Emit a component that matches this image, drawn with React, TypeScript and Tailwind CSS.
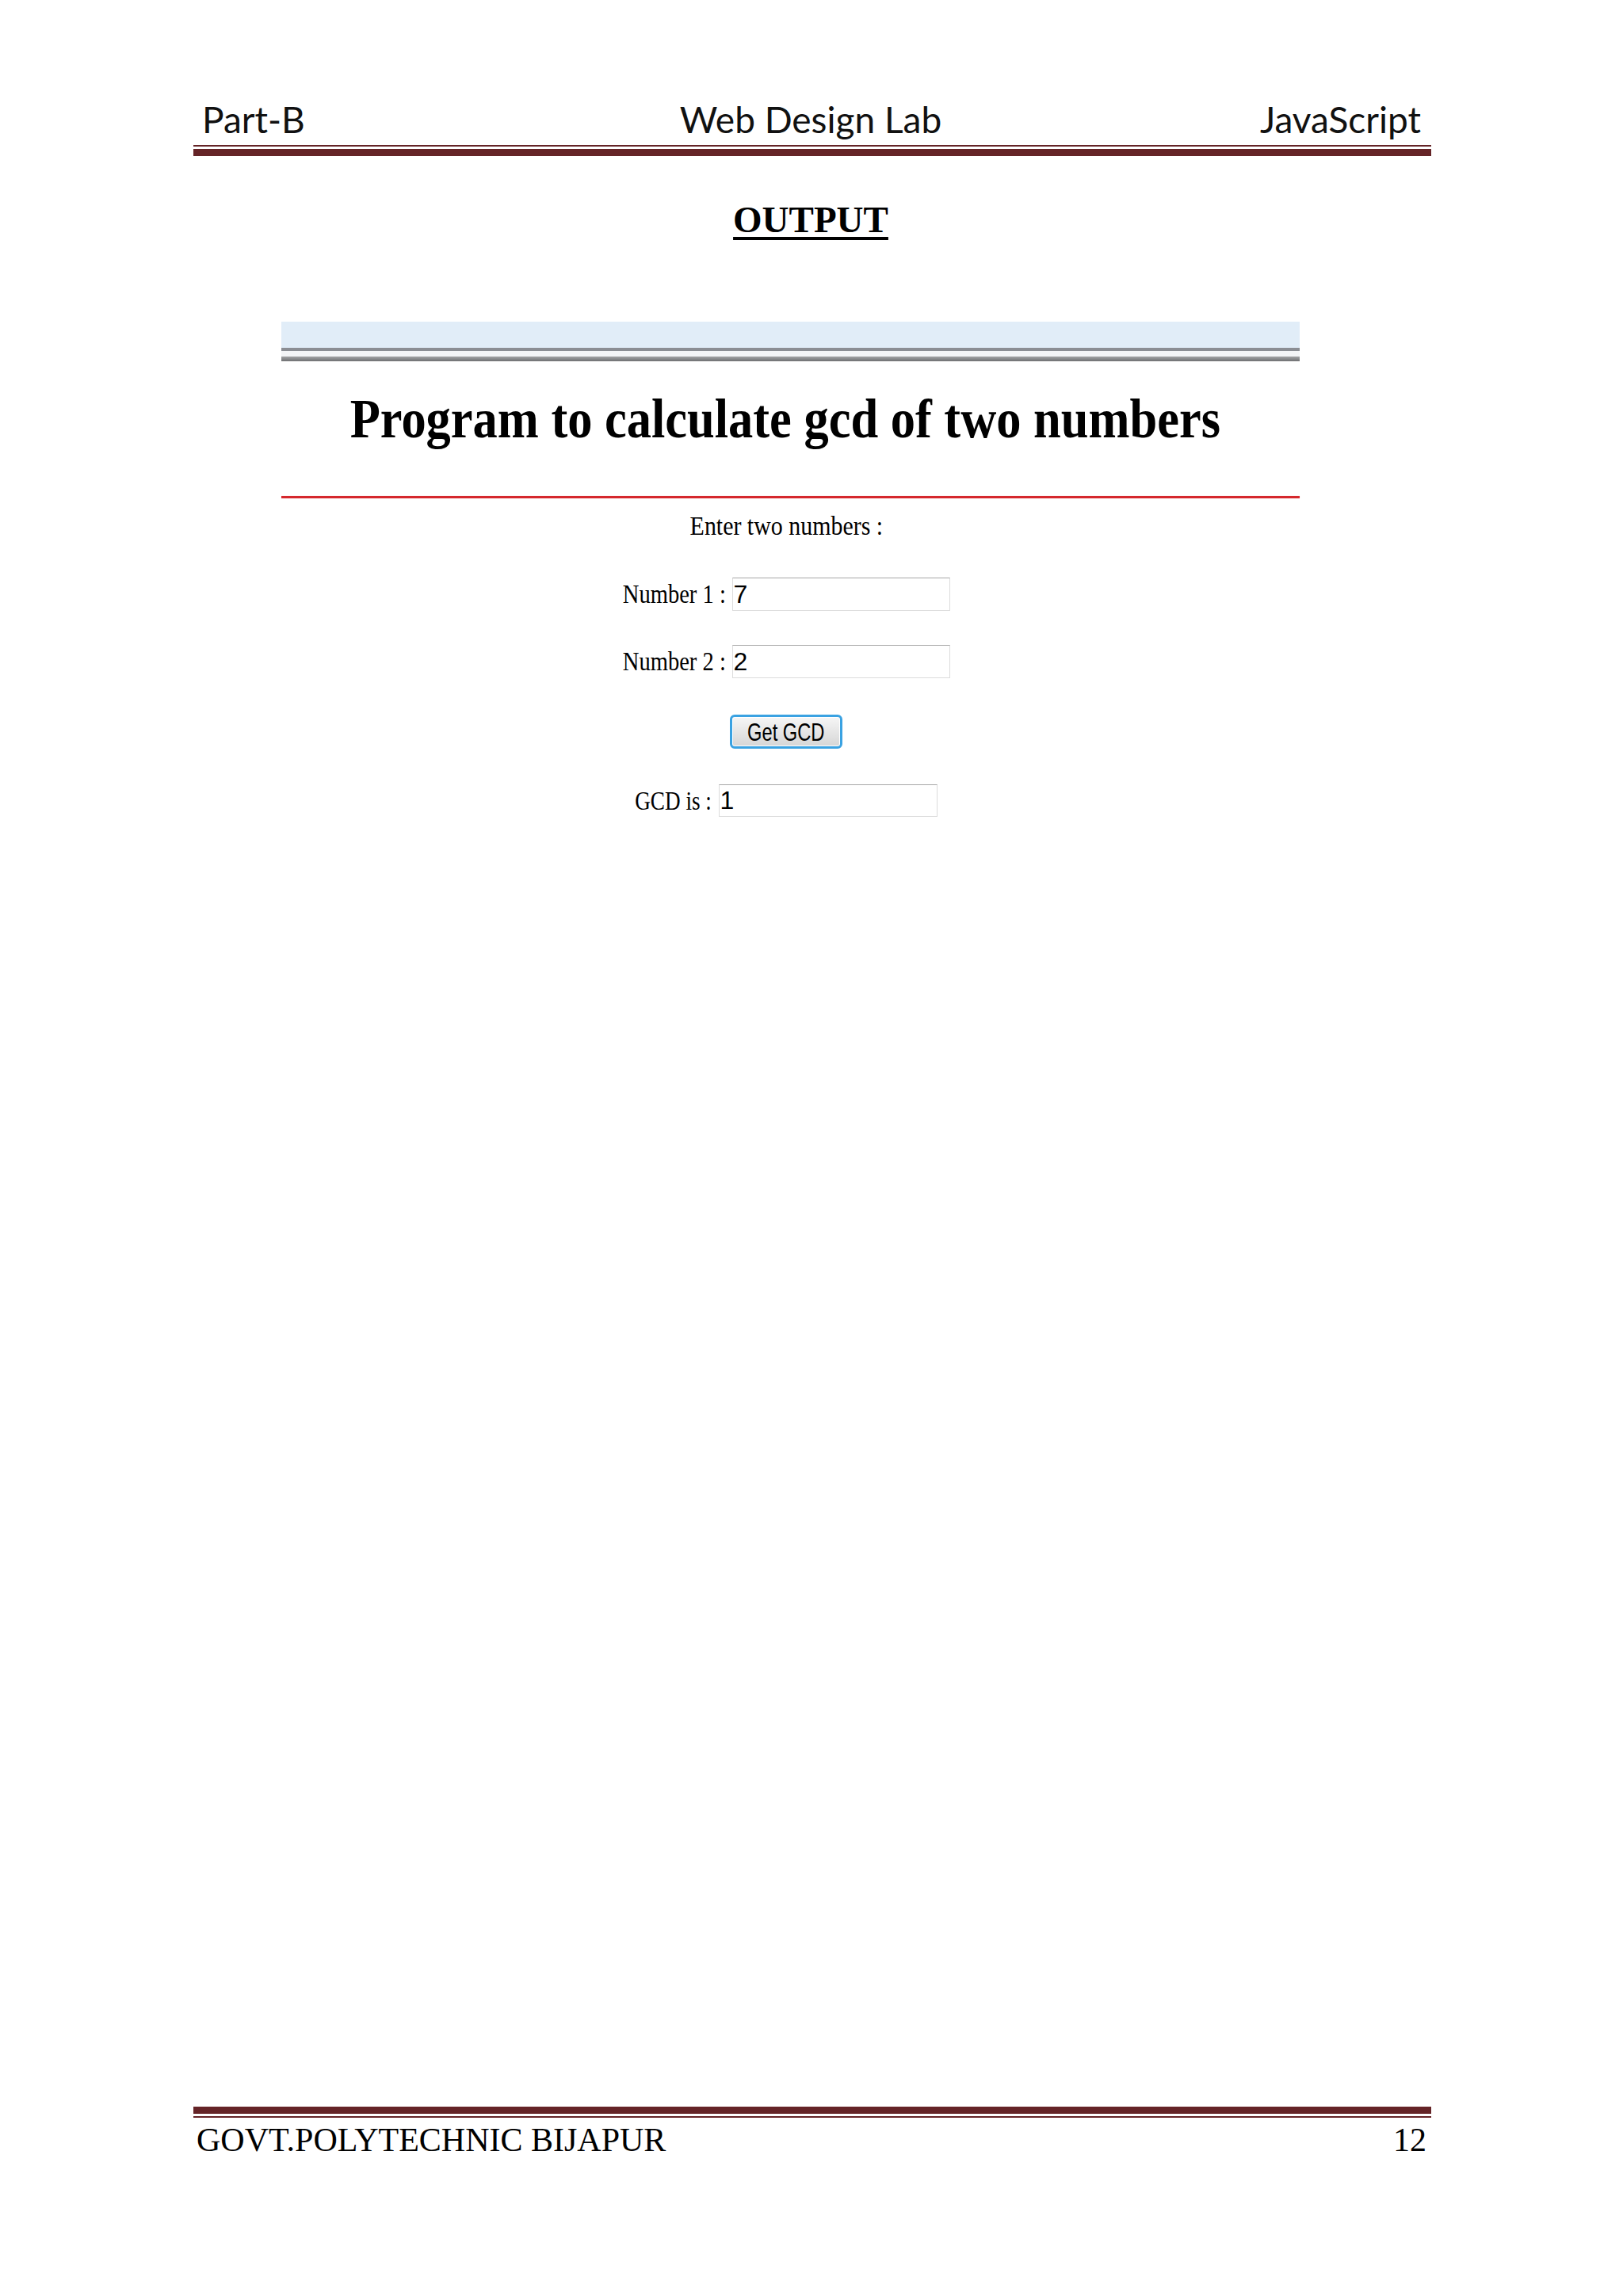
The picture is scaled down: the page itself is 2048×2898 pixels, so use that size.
import React from 'react';

const serif = "font-['Liberation_Serif','Times_New_Roman',serif]";

export default function App() {
  return (
    <div className="min-h-[2898px] bg-white flex flex-col text-black">
      <div className="ml-[244px] w-[1562px] flex flex-col flex-1 pt-[123px] pb-[173px]">
        {/* page header */}
        <header>
          <div className="grid grid-cols-[1fr_auto_1fr] pl-[11px] pr-[13px] font-['Lato',sans-serif] text-[46px] leading-[55px] text-[#111]">
            <span>Part-B</span>
            <span className="mr-[2px]">Web Design Lab</span>
            <span className="text-right">JavaScript</span>
          </div>
          <div className="mt-[5px] h-[2px] bg-[#652427]" />
          <div className="mt-[3px] h-[9px] bg-[#652427]" />
        </header>

        <div className={`mt-[57px] pr-[4px] text-center ${serif} font-bold text-[47px] leading-[47px]`}>
          <span className="underline decoration-[4px] underline-offset-[6px]">OUTPUT</span>
        </div>

        {/* browser screenshot */}
        <section className="mt-[105px] ml-[111px] w-[1285px] flex flex-col">
          <div className="h-[33px] bg-[#e1edf8]" />
          <div className="h-[4px] bg-[#8b8e94]" />
          <div className="h-[7px] bg-[#f3f4f6]" />
          <div className="h-[6px] bg-linear-to-b from-[#a3a4a6] to-[#6f7072]" />

          <h1 className={`mt-[39px] pr-[13px] text-center ${serif} font-bold text-[69px] leading-[69px]`}>
            <span className="inline-block whitespace-nowrap scale-x-[0.905]">Program to calculate gcd of two numbers</span>
          </h1>

          <div className="mt-[62px] h-[3px] bg-[#d5282d] shadow-[0_0_1px_#f29a9a]" />

          <div className={`flex flex-col items-center pr-[11px] ${serif} text-[34px] leading-[34px]`}>
            <p className="mt-[18px]">
              <span className="inline-block whitespace-nowrap scale-x-[0.88]">Enter two numbers :</span>
            </p>

            <div className="mt-[48px] h-[42px] flex items-center gap-[8px]">
              <div className="w-[130px] flex justify-end">
                <span className="shrink-0 whitespace-nowrap origin-right scale-x-[0.84]">Number 1 :</span>
              </div>
              <input
                readOnly
                value="7"
                className="w-[275px] h-[42px] px-[1px] border border-[#dcdcdc] border-t-[#a7a7a7] bg-white outline-none font-['Liberation_Sans',Arial,sans-serif] text-[32px] text-black"
              />
            </div>

            <div className="mt-[43px] h-[42px] flex items-center gap-[8px]">
              <div className="w-[130px] flex justify-end">
                <span className="shrink-0 whitespace-nowrap origin-right scale-x-[0.84]">Number 2 :</span>
              </div>
              <input
                readOnly
                value="2"
                className="w-[275px] h-[42px] px-[1px] border border-[#dcdcdc] border-t-[#a7a7a7] bg-white outline-none font-['Liberation_Sans',Arial,sans-serif] text-[32px] text-black"
              />
            </div>

            <button className="mt-[46px] w-[142px] h-[43px] rounded-[6px] border-[3px] border-[#3aa2e2] bg-linear-to-b from-[#f6f6f6] to-[#d6d6d6] shadow-[inset_0_0_0_1px_#ffffff] flex items-center justify-center">
              <span className="inline-block whitespace-nowrap scale-x-[0.74] font-['Liberation_Sans',Arial,sans-serif] text-[32px] leading-none text-black">Get GCD</span>
            </button>

            <div className="mt-[45px] h-[41px] flex items-center gap-[9px]">
              <div className="w-[96px] flex justify-end">
                <span className="shrink-0 whitespace-nowrap origin-right scale-x-[0.8]">GCD is :</span>
              </div>
              <input
                readOnly
                value="1"
                className="w-[276px] h-[41px] px-[1px] border border-[#dcdcdc] border-t-[#a7a7a7] bg-white outline-none font-['Liberation_Sans',Arial,sans-serif] text-[32px] text-black"
              />
            </div>
          </div>
        </section>

        {/* page footer */}
        <footer className="mt-auto">
          <div className="h-[9px] bg-[#652427]" />
          <div className="mt-[3px] h-[2px] bg-[#652427]" />
          <div className={`mt-[4px] flex justify-between pl-[4px] pr-[6px] ${serif} text-[42px] leading-[48px]`}>
            <span>GOVT.POLYTECHNIC BIJAPUR</span>
            <span>12</span>
          </div>
        </footer>
      </div>
    </div>
  );
}
